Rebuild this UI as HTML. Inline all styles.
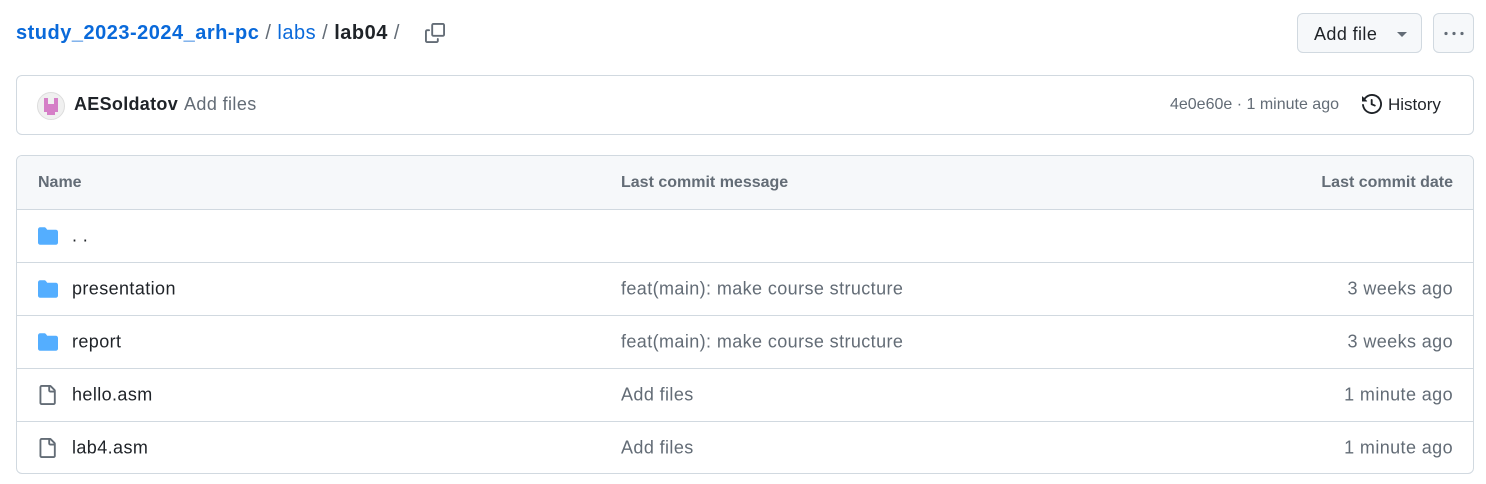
<!DOCTYPE html>
<html><head><style>
*{box-sizing:border-box;margin:0;padding:0}
body{width:1486px;height:484px;background:#fff;font-family:"Liberation Sans",sans-serif;color:#1f2328;position:relative;overflow:hidden}
.abs{position:absolute}
.bc{left:16px;top:19px;font-size:20px;line-height:28px;white-space:nowrap;letter-spacing:0.5px}
.bc a{color:#0969da;text-decoration:none}
.bc .s{color:#636c76;margin:0 6px}
.btn{border:1px solid #d1d9e0;background:#f6f8fa;border-radius:6px;top:13px;height:40px}
.box{border:1px solid #d1d9e0;border-radius:6px;left:16px;width:1458px}
.row{position:absolute;left:0;right:0;height:53px;border-top:1px solid #d1d9e0;font-size:18px;letter-spacing:0.4px}
.row span{position:absolute;top:50%;transform:translateY(-50%);white-space:nowrap}
.n{left:55px}.m{left:604px;color:#636c76}.d{right:20px;color:#636c76}
.ic{position:absolute;left:20px;top:50%;transform:translateY(-50%)}
</style></head><body>
<div class="abs bc"><a style="font-weight:bold">study_2023-2024_arh-pc</a><span class="s">/</span><a>labs</a><span class="s">/</span><b>lab04</b><span class="s">/</span></div>
<svg class="abs" style="left:425px;top:23px" width="20" height="20" viewBox="0 0 16 16" fill="#636c76"><path d="M0 6.75C0 5.78.78 5 1.75 5h1.5a.75.75 0 0 1 0 1.5h-1.5a.25.25 0 0 0-.25.25v7.5c0 .14.11.25.25.25h7.5a.25.25 0 0 0 .25-.25v-1.5a.75.75 0 0 1 1.5 0v1.5A1.75 1.75 0 0 1 9.25 16h-7.5A1.75 1.75 0 0 1 0 14.25Z"/><path d="M5 1.75C5 .78 5.78 0 6.75 0h7.5C15.22 0 16 .78 16 1.75v7.5A1.75 1.75 0 0 1 14.25 11h-7.5A1.75 1.75 0 0 1 5 9.25Zm1.75-.25a.25.25 0 0 0-.25.25v7.5c0 .14.11.25.25.25h7.5a.25.25 0 0 0 .25-.25v-7.5a.25.25 0 0 0-.25-.25Z"/></svg>
<div class="abs btn" style="left:1297px;width:125px"><span class="abs" style="left:16px;top:10px;font-size:18px;letter-spacing:0.4px">Add file</span><span class="abs" style="left:99px;top:18px;border:5px solid transparent;border-top:5px solid #636c76;border-bottom:0"></span></div>
<div class="abs btn" style="left:1433px;width:41px"><svg class="abs" style="left:9px;top:17px" width="22" height="5"><circle cx="3" cy="2.5" r="1.6" fill="#636c76"/><circle cx="11" cy="2.5" r="1.6" fill="#636c76"/><circle cx="19" cy="2.5" r="1.6" fill="#636c76"/></svg></div>
<div class="abs box" style="top:75px;height:60px">
<svg class="abs" style="left:20px;top:16px" width="28" height="28" viewBox="0 0 28 28"><circle cx="14" cy="14" r="13.5" fill="#f0f0f0" stroke="#ddd"/><path d="M7 6h4v6h6V6h4v14h-3v3h-8v-3H7z" fill="#d57fc7"/></svg>
<span class="abs" style="left:57px;top:18px;font-size:18px;font-weight:bold;letter-spacing:0.3px">AESoldatov</span>
<span class="abs" style="left:167px;top:18px;font-size:18px;color:#636c76;letter-spacing:0.4px">Add files</span>
<span class="abs" style="right:134px;top:20px;font-size:16px;color:#636c76">4e0e60e · 1 minute ago</span>
<svg class="abs" style="left:1345px;top:18px" width="20" height="20" viewBox="0 0 16 16" fill="#1f2328"><path d="m.427 1.927 1.215 1.215a8.002 8.002 0 1 1-1.6 5.685.75.75 0 1 1 1.493-.154 6.5 6.5 0 1 0 1.18-4.458l1.358 1.358A.25.25 0 0 1 3.896 6H.25A.25.25 0 0 1 0 5.75V2.104a.25.25 0 0 1 .427-.177ZM7.75 4a.75.75 0 0 1 .75.75v2.992l2.028.812a.75.75 0 0 1-.557 1.392l-2.5-1A.751.751 0 0 1 7 8.25v-3.5A.75.75 0 0 1 7.75 4Z"/></svg>
<span class="abs" style="left:1371px;top:19px;font-size:17px">History</span>
</div>
<div class="abs box" style="top:155px;height:319px;overflow:hidden">
<div class="row" style="top:0;border-top:0;background:#f6f8fa;font-size:16px;color:#636c76;font-weight:bold;letter-spacing:0"><span style="left:21px">Name</span><span style="left:604px">Last commit message</span><span class="d">Last commit date</span></div>
<div class="row" style="top:53px"><svg class="ic" width="22" height="20" viewBox="0 0 16 16" fill="#54aeff"><path d="M1.75 1A1.75 1.75 0 0 0 0 2.75v10.5C0 14.216.784 15 1.75 15h12.5A1.75 1.75 0 0 0 16 13.25v-8.5A1.75 1.75 0 0 0 14.25 3H7.5a.25.25 0 0 1-.2-.1l-.9-1.2C6.07 1.26 5.55 1 5 1H1.75Z"/></svg><span class="n">. .</span></div>
<div class="row" style="top:106px"><svg class="ic" width="22" height="20" viewBox="0 0 16 16" fill="#54aeff"><path d="M1.75 1A1.75 1.75 0 0 0 0 2.75v10.5C0 14.216.784 15 1.75 15h12.5A1.75 1.75 0 0 0 16 13.25v-8.5A1.75 1.75 0 0 0 14.250 3H7.5a.25.25 0 0 1-.2-.1l-.9-1.2C6.07 1.26 5.55 1 5 1H1.75Z"/></svg><span class="n">presentation</span><span class="m">feat(main): make course structure</span><span class="d">3 weeks ago</span></div>
<div class="row" style="top:159px"><svg class="ic" width="22" height="20" viewBox="0 0 16 16" fill="#54aeff"><path d="M1.75 1A1.75 1.75 0 0 0 0 2.75v10.5C0 14.216.784 15 1.75 15h12.5A1.75 1.75 0 0 0 16 13.25v-8.5A1.75 1.75 0 0 0 14.25 3H7.5a.25.25 0 0 1-.2-.1l-.9-1.2C6.07 1.26 5.55 1 5 1H1.75Z"/></svg><span class="n">report</span><span class="m">feat(main): make course structure</span><span class="d">3 weeks ago</span></div>
<div class="row" style="top:212px"><svg class="ic" width="20" height="20" viewBox="0 0 16 16" fill="#636c76"><path d="M2 1.750C2 .784 2.784 0 3.75 0h6.586c.464 0 .909.184 1.237.513l2.914 2.914c.329.328.513.773.513 1.237v9.586A1.75 1.75 0 0 1 13.25 16h-9.5A1.75 1.75 0 0 1 2 14.25Zm1.75-.25a.25.25 0 0 0-.25.25v12.5c0 .138.112.25.25.25h9.5a.25.25 0 0 0 .25-.25V6h-2.75A1.75 1.75 0 0 1 9 4.25V1.5Zm6.75.062V4.25c0 .138.112.25.25.25h2.688l-.011-.013-2.914-2.914-.013-.011Z"/></svg><span class="n">hello.asm</span><span class="m">Add files</span><span class="d">1 minute ago</span></div>
<div class="row" style="top:265px"><svg class="ic" width="20" height="20" viewBox="0 0 16 16" fill="#636c76"><path d="M2 1.75C2 .784 2.784 0 3.75 0h6.586c.464 0 .909.184 1.237.513l2.914 2.914c.329.328.513.773.513 1.237v9.586A1.75 1.75 0 0 1 13.25 16h-9.5A1.75 1.75 0 0 1 2 14.25Zm1.75-.25a.25.25 0 0 0-.25.25v12.5c0 .138.112.25.25.25h9.5a.25.25 0 0 0 .25-.25V6h-2.75A1.75 1.75 0 0 1 9 4.25V1.5Zm6.75.062V4.25c0 .138.112.25.25.25h2.688l-.011-.013-2.914-2.914-.013-.011Z"/></svg><span class="n">lab4.asm</span><span class="m">Add files</span><span class="d">1 minute ago</span></div>
</div>
</body></html>
